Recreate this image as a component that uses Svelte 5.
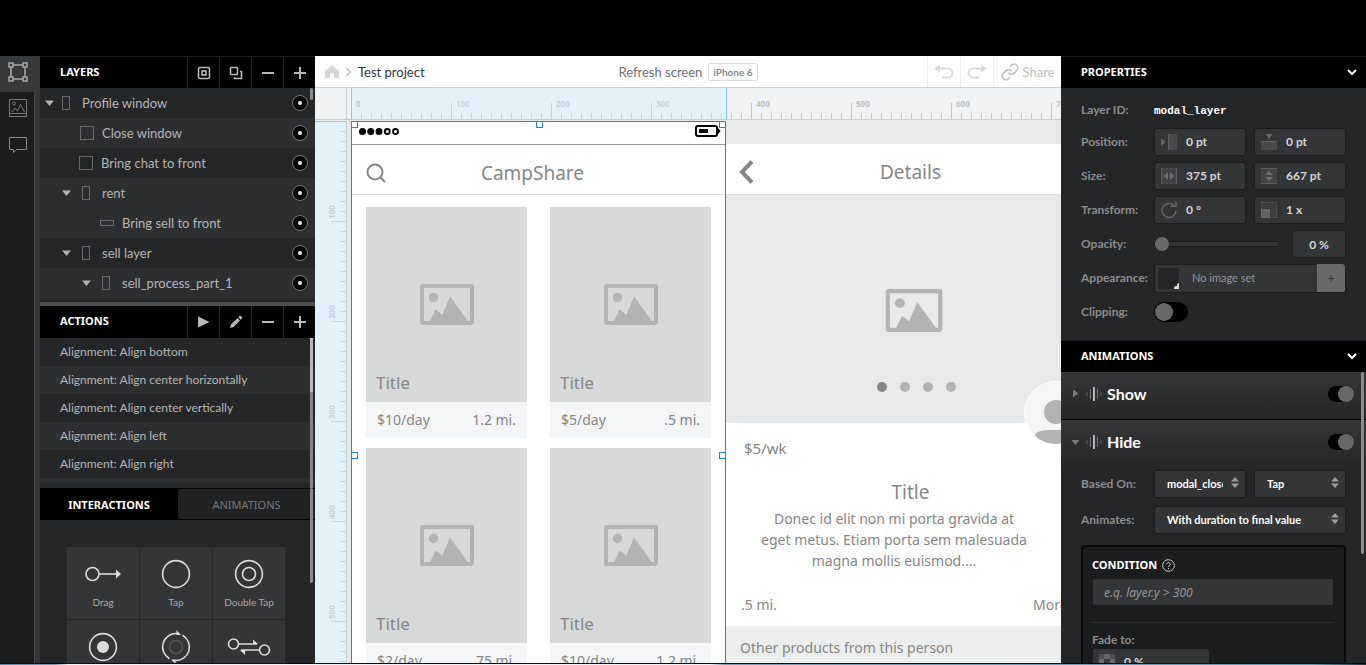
<script>
  const layers = [
    { name: 'Profile window', pad: 5, arrow: true, kind: 'tall', shade: 0 },
    { name: 'Close window', pad: 40, arrow: false, kind: 'square', shade: 1 },
    { name: 'Bring chat to front', pad: 39, arrow: false, kind: 'square', shade: 0 },
    { name: 'rent', pad: 22, arrow: true, kind: 'tall', shade: 1 },
    { name: 'Bring sell to front', pad: 60, arrow: false, kind: 'wide', shade: 1 },
    { name: 'sell layer', pad: 22, arrow: true, kind: 'tall', shade: 0 },
    { name: 'sell_process_part_1', pad: 42, arrow: true, kind: 'tall', shade: 1 }
  ];
  const actions = ['bottom', 'center horizontally', 'center vertically', 'left', 'right'];
  const interactions = ['Drag', 'Tap', 'Double Tap', 'Long Press', 'Rotate', 'Pinch'];
  const products = [
    { price: '$10/day', distance: '1.2 mi.' },
    { price: '$5/day', distance: '.5 mi.' },
    { price: '$2/day', distance: '75 mi.' },
    { price: '$10/day', distance: '1.2 mi.' }
  ];
  const ticks = Array.from({ length: 120 }, (_, i) => i * 10);
  let tab = $state('interactions');
  let opacity = $state(0);
  let clipping = $state(false);
  let show = $state(true);
  let hide = $state(true);
</script>

{#snippet picture()}
  <svg class="picture" viewBox="0 0 54 41" aria-hidden="true">
    <rect x="2" y="2" width="50" height="37" rx="1" fill="none" stroke="#b2b4b3" stroke-width="4" />
    <circle cx="13.5" cy="13.5" r="4.7" fill="#b2b4b3" />
    <path d="M9.5 38 15.7 25.5 22.3 31 30 12.5 48.5 38z" fill="#b2b4b3" />
  </svg>
{/snippet}

{#snippet minus()}
  <svg width="14" height="14"><path d="M1 7h12" stroke="#b9babb" stroke-width="2" /></svg>
{/snippet}

{#snippet plus()}
  <svg width="14" height="14"><path d="M1 7h12M7 1v12" stroke="#b9babb" stroke-width="2" /></svg>
{/snippet}

{#snippet sortArrows()}
  <svg class="arrows" width="8" height="12"><path d="M4 0 8 4.500H0zM4 11 8 6.500H0z" fill="#9a9b9d" /></svg>
{/snippet}

<div class="app">
  <div class="top"></div>
  <div class="main">
    <nav class="rail" aria-label="Tools">
      <button class="on" aria-label="Layers">
        <svg width="20" height="20" fill="none" stroke="#a5a6a8" stroke-width="1.500"><path d="M5 3h10M5 17h10M3 5v10M17 5v10" /><rect x="1" y="1" width="4" height="4" /><rect x="15" y="1" width="4" height="4" /><rect x="1" y="15" width="4" height="4" /><rect x="15" y="15" width="4" height="4" /></svg>
      </button>
      <button aria-label="Images">
        <svg width="20" height="20" fill="none" stroke="#77787a"><rect x="1.500" y="1.500" width="17" height="17" /><path d="M2 15.500h16M4 14l3-4 2.500 3 3-6.500 4 7.500" /><circle cx="6" cy="5.500" r="1.500" /></svg>
      </button>
      <button aria-label="Comments">
        <svg width="20" height="20" fill="none" stroke="#858688"><path d="M1.500 3.500h17v12H8.500l-3 3v-3h-4z" /></svg>
      </button>
    </nav>

    <aside class="left">
      <section class="layers">
        <header class="bar">
          <h2>LAYERS</h2>
          <button aria-label="Group"><svg width="14" height="14" fill="none" stroke="#b9babb" stroke-width="1.600"><rect x="1.500" y="1.500" width="11" height="11" rx="1.500" /><rect x="5" y="5" width="4" height="4" /></svg></button>
          <button aria-label="Duplicate"><svg width="14" height="14" fill="none" stroke="#b9babb" stroke-width="1.600"><rect x="1.500" y="1.500" width="7" height="7" rx=".8" /><path d="M11 5.500h1.500v7h-7V11" /></svg></button>
          <button aria-label="Remove layer">{@render minus()}</button>
          <button aria-label="Add layer">{@render plus()}</button>
        </header>
        <ul class="layer-list">
          {#each layers as l}
            <li class:light={l.shade === 1} style="padding-left: {l.pad}px">
              {#if l.arrow}<svg class="tri" width="9" height="6"><path d="M0 .5h9L4.500 6z" fill="#b0b1b2" /></svg>{/if}
              <i class={l.kind}></i>
              <span>{l.name}</span>
              <button class="eye" aria-label="Toggle {l.name}"></button>
            </li>
          {/each}
        </ul>
        <div class="thumb t-layers"></div>
      </section>

      <section class="actions">
        <header class="bar">
          <h2>ACTIONS</h2>
          <button aria-label="Play"><svg width="14" height="14"><path d="M1 1.500 12.500 7 1 12.500z" fill="#b9babb" /></svg></button>
          <button aria-label="Edit"><svg width="14" height="14" fill="#b9babb"><path d="M1 13l1-3.500 6.500-6.500 2.500 2.500L4.500 12z" /><path d="M9.300 2.200 10.500 1a1 1 0 0 1 1.300 0l1.200 1.200a1 1 0 0 1 0 1.300l-1.200 1.200z" /></svg></button>
          <button aria-label="Remove action">{@render minus()}</button>
          <button aria-label="Add action">{@render plus()}</button>
        </header>
        <ul class="action-list">
          {#each actions as a}<li>Alignment: Align {a}</li>{/each}
          <li class="peek"></li>
        </ul>
        <div class="thumb t-actions"></div>
      </section>

      <section class="library">
        <div class="tabs">
          <button class:active={tab === 'interactions'} onclick={() => (tab = 'interactions')}>INTERACTIONS</button>
          <button class:active={tab === 'animations'} onclick={() => (tab = 'animations')}>ANIMATIONS</button>
        </div>
        <div class="tiles">
          {#each interactions as name, i}
            <button class="tile">
              <svg width="46" height="34" fill="none" stroke="#dcdcdd" stroke-width="1.600">
                {#if i === 0}
                  <circle cx="12.500" cy="17" r="6.500" /><path d="M19 17h18" /><path d="M36 12.500l5 4.500-5 4.500z" fill="#dcdcdd" stroke="none" />
                {:else if i === 1}
                  <circle cx="23" cy="17" r="13.400" />
                {:else if i === 2}
                  <circle cx="23" cy="17" r="13.400" /><circle cx="23" cy="17" r="6.500" />
                {:else if i === 3}
                  <circle cx="23" cy="17" r="13.400" /><circle cx="23" cy="17" r="6" fill="#dcdcdd" stroke="none" />
                {:else if i === 4}
                  <path d="M29.500 5.300A13.400 13.400 0 0 1 22 30.400M16.500 28.700A13.400 13.400 0 0 1 24 3.600" /><circle cx="23" cy="17" r="6.500" stroke="#555658" /><path d="M23.500 0v5h4.500zM22.500 34v-4.500H18z" fill="#dcdcdd" stroke="none" />
                {:else}
                  <circle cx="7.500" cy="14" r="5" /><circle cx="38.500" cy="20" r="5" /><path d="M13 14h18M33 20H15" /><path d="M27 9.500v4.500h5zM19 25v-5h-5z" fill="#dcdcdd" stroke="none" />
                {/if}
              </svg>
              <span>{name}</span>
            </button>
          {/each}
        </div>
        <div class="thumb t-library"></div>
      </section>
    </aside>

    <main class="center">
      <header class="toolbar">
        <div class="crumbs">
          <a href="#home" aria-label="Home"><svg width="14" height="13"><path d="M7 0 14 6v7H9V8.500H5V13H0V6z" fill="#d5d6d9" /></svg></a>
          <svg width="7" height="10" fill="none" stroke="#c2c3c6" stroke-width="1.500"><path d="M1 .8 5.500 5 1 9.200" /></svg>
          <span>Test project</span>
        </div>
        <div class="screen"><span>Refresh screen</span><b>iPhone 6</b></div>
        <div class="tools">
          <button aria-label="Undo"><svg width="20" height="15" fill="none" stroke="#dadbdd" stroke-width="2"><path d="M4 4.500h10a4.500 4.500 0 0 1 0 9H8" /><path d="M0 4.500 6 .5v8z" fill="#dadbdd" stroke="none" /></svg></button>
          <button aria-label="Redo"><svg width="20" height="15" fill="none" stroke="#dadbdd" stroke-width="2"><path d="M16 4.500H6a4.500 4.500 0 0 0 0 9h6" /><path d="M20 4.500 14 .5v8z" fill="#dadbdd" stroke="none" /></svg></button>
          <button class="share"><svg width="18" height="18" viewBox="0 0 24 24" fill="none" stroke="#b9babd" stroke-width="2"><path d="M10 13a5 5 0 0 0 7.540.540l3.500-3.500a5 5 0 0 0-7.070-7.070L12 5" /><path d="M14 11a5 5 0 0 0-7.540-.540l-3.500 3.500a5 5 0 0 0 7.070 7.070L12 19" /></svg>Share</button>
        </div>
      </header>

      <div class="workspace">
        <div class="corner"></div>
        <div class="ruler-x">
          <svg width="1200" height="31" shape-rendering="crispEdges">
            <rect x="4" width="376" height="31" fill="#e1f2fa" />
            {#each ticks as t}
              <rect x={t + 4} y={t % 100 ? 25 : 15} width="1" height={t % 100 ? 6 : 16} fill={t < 375 ? '#c5d8e0' : '#c4c6c9'} />
              {#if t % 100 === 0}<text x={t + 9} y="19" fill={t < 375 ? '#c3d3da' : '#bdbfc2'}>{t}</text>{/if}
            {/each}
            <path d="M4.500 0v31M379.500 0v31" stroke="#8cc6f0" />
          </svg>
        </div>
        <div class="ruler-y">
          <svg width="31" height="1200" shape-rendering="crispEdges">
            <rect y="1" width="31" height="668" fill="#e1f2fa" />
            {#each ticks as t}
              <rect x={t % 100 ? 25 : 16} y={t + 1} width={t % 100 ? 6 : 15} height="1" fill="#c5d8e0" />
              {#if t && t % 100 === 0}<text transform="translate(20 {t - 1}) rotate(-90)" fill="#c3d3da">{t}</text>{/if}
            {/each}
            <path d="M0 1.500h31" stroke="#8cc6f0" />
          </svg>
        </div>

        <div class="stage">
          <article class="phone">
            <div class="status">
              <svg width="42" height="9"><g stroke="#000" stroke-width="1.800"><circle cx="4.500" cy="4.500" r="2.600" /><circle cx="12.700" cy="4.500" r="2.600" /><circle cx="21" cy="4.500" r="2.600" /><circle cx="29.300" cy="4.500" r="2.500" fill="#fff" /><circle cx="37.500" cy="4.500" r="2.500" fill="#fff" /></g></svg>
              <svg width="26" height="12"><rect x="1" y="1" width="21" height="10" rx="2" fill="#fff" stroke="#000" stroke-width="2" /><rect x="4" y="4" width="9" height="4" /><path d="M23 3l2.500 3L23 9z" /></svg>
            </div>
            <div class="nav">
              <svg width="20" height="20" fill="none" stroke="#858786" stroke-width="2"><circle cx="9" cy="9" r="7.500" /><path d="M14.500 14.500 19 19" /></svg>
              <h3>CampShare</h3>
              <span></span>
            </div>
            <div class="cards">
              {#each products as p}
                <div class="card">
                  <div class="photo">{@render picture()}<h4>Title</h4></div>
                  <div class="info"><span>{p.price}</span><span>{p.distance}</span></div>
                </div>
              {/each}
            </div>
            <i class="handle" style="left: 0; top: 0"></i>
            <i class="handle" style="left: 185px; top: 0"></i>
            <i class="handle" style="left: 368px; top: 0"></i>
            <i class="handle" style="left: 0; top: 331px"></i>
            <i class="handle" style="left: 368px; top: 331px"></i>
          </article>

          <article class="details">
            <div class="nav">
              <svg width="16" height="24" fill="none" stroke="#858786" stroke-width="4"><path d="M14 1.500 4 12l10 10.500" /></svg>
              <h3>Details</h3>
              <span></span>
            </div>
            <div class="hero">
              {@render picture()}
              <div class="dots"><i class="cur"></i><i></i><i></i><i></i></div>
              <svg class="avatar" viewBox="0 0 64 64"><defs><clipPath id="face"><circle cx="32" cy="32" r="31" /></clipPath></defs><circle cx="32" cy="32" r="31.500" fill="#f4f5f7" stroke="#fff" /><g fill="#b2b4b3" clip-path="url(#face)"><circle cx="32" cy="31" r="12" /><path d="M11 64V54c2-4 6-5 21-5s19 1 21 5v10z" /></g></svg>
            </div>
            <div class="sheet">
              <p class="price">$5/wk</p>
              <h4>Title</h4>
              <p class="desc">Donec id elit non mi porta gravida at<br />eget metus. Etiam porta sem malesuada<br />magna mollis euismod....</p>
              <div class="meta"><span>.5 mi.</span><span>More</span></div>
            </div>
            <p class="others">Other products from this person</p>
          </article>
        </div>
      </div>
    </main>

    <aside class="right">
      <header class="head"><h2>PROPERTIES</h2><svg width="10" height="7" fill="none" stroke="#fff" stroke-width="2"><path d="M1 1l4 4 4-4" /></svg></header>
      <div class="props">
        <div class="row id"><span class="label">Layer ID:</span><code>modal_layer</code></div>
        <div class="row">
          <label for="px">Position:</label>
          <div class="field"><svg width="16" height="16"><path d="M0 4l5 4-5 4z" fill="#606163" /><path d="M7 0h9v16H7z" fill="#48494b" /><path d="M7.500 0v16" stroke="#5c5d5f" /></svg><input id="px" value="0 pt" /></div>
          <div class="field"><svg width="16" height="16"><path d="M4 0h8l-4 5z" fill="#606163" /><path d="M0 7h16v9H0z" fill="#48494b" /><path d="M0 7.500h16" stroke="#5c5d5f" /></svg><input aria-label="Position Y" value="0 pt" /></div>
        </div>
        <div class="row">
          <label for="sw">Size:</label>
          <div class="field"><svg width="16" height="16"><path d="M0 0h16v16H0z" fill="#434446" /><path d="M.5 0v16M15.500 0v16" stroke="#5c5d5f" /><path d="M7 4v8L3 8zM9 4v8l4-4z" fill="#6b6c6e" /></svg><input id="sw" value="375 pt" /></div>
          <div class="field"><svg width="16" height="16"><path d="M0 0h16v16H0z" fill="#434446" /><path d="M0 .5h16M0 15.500h16" stroke="#5c5d5f" /><path d="M4 7h8L8 3zM4 9h8l-4 4z" fill="#6b6c6e" /></svg><input aria-label="Height" value="667 pt" /></div>
        </div>
        <div class="row">
          <label for="rot">Transform:</label>
          <div class="field"><svg width="16" height="16" fill="none" stroke="#656668" stroke-width="1.400"><path d="M13 3.500A7 7 0 1 0 15 8.500" /><path d="M9.500 4.300H15V0" /></svg><input id="rot" value="0 °" /></div>
          <div class="field"><svg width="16" height="16"><rect width="16" height="16" fill="#3b3c3e" /><rect x=".5" y=".5" width="15" height="15" fill="none" stroke="#58595b" stroke-dasharray="2 1.500" /><rect y="7" width="9" height="9" fill="#626365" /></svg><input aria-label="Scale" value="1 x" /></div>
        </div>
        <div class="row slide">
          <label for="op">Opacity:</label>
          <input id="op" class="range" type="range" min="0" max="100" bind:value={opacity} />
          <input class="percent" aria-label="Opacity percent" value="{opacity} %" />
        </div>
        <div class="row look">
          <span class="label">Appearance:</span>
          <div class="image"><button class="swatch" aria-label="Fill colour"></button><span>No image set</span><button class="add" aria-label="Add image">+</button></div>
        </div>
        <div class="row clip">
          <label for="cl">Clipping:</label>
          <input id="cl" class="switch big" type="checkbox" bind:checked={clipping} />
        </div>
      </div>

      <header class="head"><h2>ANIMATIONS</h2><svg width="10" height="7" fill="none" stroke="#fff" stroke-width="2"><path d="M1 1l4 4 4-4" /></svg></header>
      <div class="anims">
        <div class="anim">
          <svg width="9" height="9"><path d="M2 .5 7.500 4.500 2 8.500z" fill="#77787a" /></svg>
          <svg class="wave" width="16" height="14"><path d="M1 5v4M15 5v4" stroke="#434446" stroke-width="2" /><path d="M4.500 2v10M11.500 2v10" stroke="#727375" /><path d="M8 0v14" stroke="#b5b6b8" stroke-width="2" /></svg>
          <h3>Show</h3>
          <input class="switch" type="checkbox" aria-label="Show enabled" bind:checked={show} />
        </div>
        <div class="anim">
          <svg width="9" height="9"><path d="M.5 2h8L4.500 7z" fill="#77787a" /></svg>
          <svg class="wave" width="16" height="14"><path d="M1 5v4M15 5v4" stroke="#434446" stroke-width="2" /><path d="M4.500 2v10M11.500 2v10" stroke="#727375" /><path d="M8 0v14" stroke="#b5b6b8" stroke-width="2" /></svg>
          <h3>Hide</h3>
          <input class="switch" type="checkbox" aria-label="Hide enabled" bind:checked={hide} />
        </div>
        <div class="row sel">
          <label for="based">Based On:</label>
          <div class="pick"><select id="based"><option>modal_close</option></select>{@render sortArrows()}</div>
          <div class="pick"><select aria-label="Gesture"><option>Tap</option></select>{@render sortArrows()}</div>
        </div>
        <div class="row sel single">
          <label for="mode">Animates:</label>
          <div class="pick"><select id="mode"><option>With duration to final value</option></select>{@render sortArrows()}</div>
        </div>
        <div class="condition">
          <label for="cond">CONDITION <svg width="13" height="13" fill="none" stroke="#c9cacb"><circle cx="6.500" cy="6.500" r="5.800" /><path d="M4.800 5.200a1.700 1.700 0 1 1 2.600 1.400c-.7.400-.9.700-.9 1.400M6.500 9v1.200" /></svg></label>
          <input id="cond" placeholder="e.q. layer.y > 300" />
          <hr />
          <label class="fade" for="fade">Fade to:</label>
          <div class="field wide-field"><svg width="16" height="16" shape-rendering="crispEdges"><rect width="16" height="16" fill="#4a4b4d" /><path d="M5 0h6v5H5zM0 5h5v6H0zM11 5h5v6h-5z" fill="#68696b" /><path d="M5 5h6v6H5z" fill="#38393b" /></svg><input id="fade" value="0 %" /></div>
        </div>
        <div class="thumb t-anims"></div>
      </div>
    </aside>
  </div>
  <div class="foot"></div>
</div>

<style>
  :global(body) { margin: 0; background: #000; }
  * { box-sizing: border-box; }
  h2, h3, h4, p, ul { margin: 0; padding: 0; font-weight: 400; list-style: none; }
  button, input, select { font: inherit; color: inherit; border: 0; padding: 0; margin: 0; background: none; min-width: 0; outline: 0; }
  svg { display: block; flex: none; }
  .app { height: 100vh; display: grid; grid-template-rows: 56px minmax(0, 1fr) 2px; overflow: hidden; font-family: Lato, "Noto Sans", sans-serif; font-size: 13px; }
  .foot { border-top: 1px solid #0c1016; background: linear-gradient(90deg, #5c86a8, #7698b2 4%, #eef2f6 5% 52%, #7f9fb9 53%, #5d98b2 96%, #20333d); }
  .main { display: grid; grid-template-columns: 40px 275px minmax(0, 1fr) 305px; min-height: 0; }

  .rail { background: #1b1c1e; border-right: 5px solid #343537; box-shadow: inset -1px 0 #48494b; display: flex; flex-direction: column; }
  .rail button { width: 35px; height: 36px; display: grid; place-items: center; padding-bottom: 4px; }
  .rail .on { width: 40px; padding-right: 5px; background: #38393b; }

  .left { display: flex; flex-direction: column; min-height: 0; background: #252628; color: #b4b5b6; }
  .left section { position: relative; }
  .bar { display: flex; height: 32px; background: #000; border-top: 1px solid #1f2022; }
  .actions .bar { border-top: 0; }
  .bar h2, .head h2 { flex: 1; font: 700 11px/30px "Noto Sans", sans-serif; color: #fff; padding-left: 20px; }
  .bar button { width: 32px; border-left: 1px solid #252628; display: grid; place-items: center; }
  .layer-list { height: 214px; overflow: hidden; }
  .layer-list li { height: 30px; display: flex; align-items: center; padding-right: 7px; }
  .layer-list .light, .action-list li:nth-child(even) { background: #2d2e30; }
  .layer-list i { border: 1px solid #68696b; flex: none; margin-right: 12px; }
  .tri { margin-right: 8px; }
  .layer-list li + li .tri { margin-right: 11px; }
  .tall { width: 8px; height: 14px; }
  .square { width: 14px; height: 14px; }
  .layer-list i.square, .layer-list i.wide { margin-right: 8px; }
  .wide { width: 14px; height: 6px; }
  .layer-list span { flex: 1; }
  .eye { width: 16px; height: 16px; border: 1px solid #707173; border-radius: 50%; background: radial-gradient(circle, #ddd 0 1.5px, #08080a 2.5px); }
  .actions { border-top: 4px solid #4b4c4e; }
  .action-list { height: 150px; overflow: hidden; font-size: 12px; }
  .action-list li { height: 28px; line-height: 28px; padding-left: 20px; }
  .action-list .peek { height: 5px; }
  .library { flex: 1; min-height: 0; display: flex; flex-direction: column; }
  .tabs { display: grid; grid-template-columns: 138px 1fr; flex: none; height: 32px; border: solid #000; border-width: 1px 0; background: #212224; color: #77787a; font: 11px "Noto Sans", sans-serif; }
  .tabs .active { background: #000; color: #fff; font-weight: 700; }
  .tiles { flex: 1; min-height: 0; overflow: hidden; padding: 27px; display: grid; grid-template-columns: repeat(3, 72px); grid-auto-rows: 72px; gap: 1px; }
  .tile { background: #343537; display: flex; flex-direction: column; align-items: center; padding-top: 10px; gap: 4px; font: 10px/14px Lato, sans-serif; color: #a7a8aa; }
  .thumb { position: absolute; right: 2px; width: 3px; background: #8a8b8d; border-radius: 2px; }
  .t-layers { top: 32px; height: 12px; }
  .t-actions { top: 32px; height: 150px; background: linear-gradient(#b9babb 36%, #858688 36%); border-radius: 0; }
  .t-library { top: 0; height: 95px; }

  .center { display: grid; grid-template-rows: 32px minmax(0, 1fr); min-width: 0; min-height: 0; overflow: hidden; }
  .toolbar { background: #fff; border-bottom: 1px solid #cdced1; display: grid; grid-template-columns: 1fr auto 1fr; align-items: center; color: #6f7072; }
  .crumbs { display: flex; align-items: center; gap: 6px; padding-left: 10px; color: #333436; }
  .screen { display: flex; align-items: center; gap: 6px; font-size: 13px; }
  .screen b { font: 700 10px/16px Lato, sans-serif; border: 1px solid #dcdde0; border-radius: 2px; padding: 0 4px; color: #88898c; }
  .tools { display: flex; justify-content: flex-end; align-self: stretch; }
  .tools button { width: 33px; border-left: 1px solid #f0f0f2; display: grid; place-items: center; }
  .tools .share { width: 68px; display: flex; align-items: center; justify-content: center; gap: 4px; color: #bfc0c3; }
  .workspace { display: grid; grid-template: 32px minmax(0, 1fr) / 32px minmax(0, 1fr); min-height: 0; background: #e8e9eb; }
  .corner, .ruler-x, .ruler-y { background: #f1f2f4; overflow: hidden; border: 0 solid #cbccd0; }
  .corner { border-width: 0 1px 1px 0; }
  .ruler-x { border-bottom-width: 1px; }
  .ruler-y { border-right-width: 1px; }
  .workspace text { font: 700 8px "Open Sans", sans-serif; }
  .stage { display: flex; overflow: hidden; padding: 1px 0 0 4px; font-family: "Noto Sans", sans-serif; color: #858786; min-height: 0; }
  .phone { position: relative; flex: none; width: 375px; height: 667px; background: #fff; border: 1px solid #1c87e8; }
  .status { height: 23px; display: flex; justify-content: space-between; align-items: center; padding: 0 4px 4px 6px; border-bottom: 1px solid #97989a; }
  .nav { height: 50px; display: grid; grid-template-columns: 40px 1fr 40px; align-items: center; background: #fff; border-bottom: 1px solid #dddee0; padding-top: 6px; }
  .nav svg { justify-self: center; }
  .phone .nav svg { justify-self: end; margin-right: 6px; }
  .nav h3 { text-align: center; font-size: 19px; line-height: 26px; }
  .phone .nav h3 { margin-right: 12px; }
  .cards { display: grid; grid-template-columns: 161px 161px; align-content: start; gap: 10px 23px; padding: 12px 14px; }
  .photo { height: 195px; background: #d7d9d8; display: grid; grid-template-rows: 1fr 41px 1fr; justify-items: center; }
  .picture { width: 54px; height: 41px; grid-row: 2; }
  .photo h4 { grid-row: 3; justify-self: start; align-self: end; padding: 0 0 6px 10px; font-size: 17px; line-height: 26px; }
  .info { height: 36px; background: #f4f5f7; display: flex; justify-content: space-between; padding: 0 11px; font-size: 14px; line-height: 36px; }
  .handle { position: absolute; width: 7px; height: 7px; margin: -1px; border: 1px solid #1c87e8; background: #fff; }
  .details { flex: none; width: 375px; padding-top: 23px; font-size: 14px; }
  .details > .nav { height: 51px; }
  .details h3 { padding-right: 6px; }
  .hero { position: relative; height: 228px; background: #e8e9eb; display: flex; flex-direction: column; align-items: center; padding-top: 94px; }
  .hero .picture { width: 58px; height: 43px; }
  .dots { display: flex; gap: 13px; padding: 50px 0 0 6px; }
  .dots i { width: 10px; height: 10px; border-radius: 50%; background: #b2b4b3; }
  .dots .cur { background: #858786; }
  .avatar { position: absolute; right: 13px; bottom: -22px; width: 64px; height: 64px; }
  .sheet { background: #fff; }
  .price { padding: 15px 18px 0; height: 54px; font-size: 15px; line-height: 20px; }
  .details h4 { text-align: center; font-size: 19px; line-height: 30px; padding-right: 6px; }
  .desc { text-align: center; line-height: 21px; padding: 1px 39px 0 0; height: 72px; }
  .meta { display: flex; height: 47px; padding: 0 15px; line-height: 52px; }
  .meta span:first-child { width: 292px; }
  .others { background: #eceeed; line-height: 44px; padding-left: 14px; }

  .right { display: flex; flex-direction: column; min-height: 0; background: #252628; color: #949597; font: 12px/16px "Noto Sans", sans-serif; }
  .head { flex: none; height: 32px; background: #000; display: flex; align-items: center; justify-content: space-between; padding: 0 9px 1px 0; border-top: 1px solid #1f2022; }
  .props { height: 252px; flex: none; padding: 9px 20px 0; display: flex; flex-direction: column; }
  .row { display: grid; grid-template-columns: 65px 1fr 1fr; column-gap: 8px; align-items: center; height: 34px; }
  .row label, .label { font: 700 12px/16px Lato, sans-serif; color: #8b8c8e; }
  .row.id { height: 28px; padding-bottom: 2px; }
  .id code { grid-column: span 2; font: 700 11px/16px "Liberation Mono", monospace; padding-top: 2px; color: #fff; }
  .field { height: 28px; border: 1px solid #1b1c1e; border-radius: 3px; background: #343537; display: flex; align-items: center; gap: 9px; padding: 0 6px; }
  .field input { width: 100%; font: 700 12px/16px Lato, sans-serif; color: #d2d3d4; }
  .slide { grid-template-columns: 73px 1fr 54px; column-gap: 0; }
  .range { appearance: none; height: 16px; width: 126px; }
  .range::-webkit-slider-runnable-track { height: 6px; border-radius: 3px; background: #343537; border: 1px solid #1b1c1e; }
  .range::-webkit-slider-thumb { appearance: none; width: 14px; height: 14px; margin-top: -5px; border-radius: 50%; background: #68696b; }
  .percent { height: 28px; width: 54px; border: 1px solid #1b1c1e; border-radius: 3px; background: #343537; text-align: center; font: 700 12px/16px Lato, sans-serif; color: #d2d3d4; }
  .look { grid-template-columns: 65px 1fr; }
  .look .label { white-space: nowrap; }
  .image { height: 29px; border: 1px solid #1b1c1e; border-radius: 3px; background: #343537; display: flex; align-items: center; padding-left: 3px; font: 11px/16px Lato, sans-serif; }
  .swatch { width: 21px; height: 21px; background: linear-gradient(135deg, transparent 50%, #ddd 50%) 100% 100% / 6px 6px no-repeat #252628; margin-right: 13px; }
  .image span { flex: 1; }
  .add { width: 28px; height: 28px; background: #68696b; color: #3b3c3e; border-radius: 0 3px 3px 0; font-size: 14px; }
  .switch { appearance: none; width: 26px; height: 16px; border-radius: 8px; background: #000; display: flex; align-items: center; }
  .switch::before { content: ""; width: 16px; height: 16px; border-radius: 50%; background: #68696b; }
  .switch:checked { justify-content: flex-end; }
  .big { width: 34px; height: 20px; border-radius: 10px; padding: 0 1px; }
  .big::before { width: 18px; height: 18px; }
  .anims { position: relative; flex: 1; min-height: 0; overflow: hidden; }
  .anim { height: 48px; display: flex; align-items: center; padding: 0 12px 4px 10px; background: linear-gradient(#353638, #252628); border-bottom: 1px solid #000; }
  .anim + .anim { border-bottom: 0; }
  .anim h3 { flex: 1; font: 700 16px/20px Lato, sans-serif; color: #fff; padding-left: 5px; }
  .wave { margin-left: 6px; }
  .sel { padding: 0 20px; height: 36px; }
  .anim + .sel { height: 32px; }
  .single { grid-template-columns: 65px 1fr; height: 40px; }
  .pick { position: relative; }
  .pick select { appearance: none; width: 100%; height: 28px; border: 1px solid #1b1c1e; border-radius: 3px; background: #343537; padding: 0 22px 0 12px; font: 700 11px/16px Lato, sans-serif; color: #fff; display: block; overflow: hidden; text-overflow: clip; }
  .arrows { position: absolute; right: 7px; top: 7px; pointer-events: none; }
  .condition { margin: 5px 20px 0; height: 200px; border: 2px solid #0a0a0b; border-radius: 4px; background: #1b1c1e; padding: 10px 10px 10px 9px; }
  .condition label { display: flex; align-items: center; gap: 5px; font: 700 11px/16px "Noto Sans", sans-serif; color: #fff; }
  .condition > input { width: 100%; height: 28px; border: 1px solid #1b1c1e; border-radius: 3px; background: #343537; padding-left: 11px; margin-top: 5px; font: italic 12px/16px "Noto Sans", sans-serif; display: block; }
  .condition > input::placeholder { color: #949597; }
  .condition hr { border: 0; border-top: 1px solid #2d2e30; margin: 16px 0 9px; }
  .condition .fade { font: 700 12px/16px Lato, sans-serif; color: #8b8c8e; }
  .wide-field { width: 118px; }
  .t-anims { top: 0; height: 182px; }
</style>
